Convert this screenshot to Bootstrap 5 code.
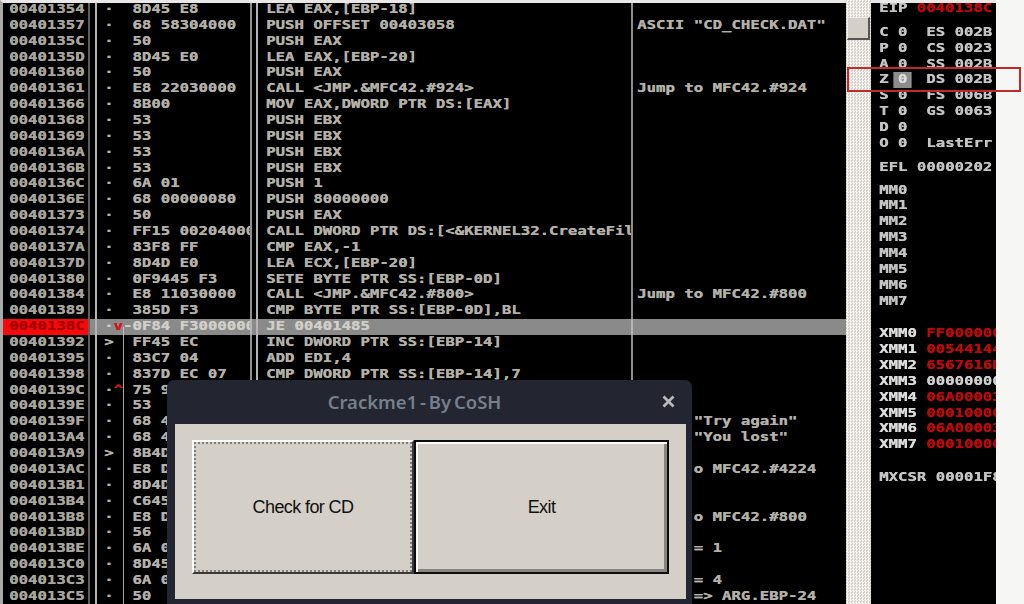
<!DOCTYPE html>
<html lang="en">
<head>
<meta charset="utf-8">
<title>Crackme1</title>
<link href="https://cdn.jsdelivr.net/npm/bootstrap@5.3.0/dist/css/bootstrap.min.css" rel="stylesheet">
<style>
html,body{height:100%;margin:0;overflow:hidden;background:#f6f6f4}
.stage{position:relative;width:1024px;height:604px;overflow:hidden;filter:blur(.4px)}
.dasm{width:846px;height:604px;background:#000;border-left:3px solid #a9a9a9;border-top:3px solid #e9e8e6;overflow:hidden;box-sizing:border-box}
.rows{margin-top:-1px}
.lrow,.rrow{height:15.87px;line-height:15.87px;font-family:"DejaVu Sans Mono",monospace;font-weight:700;font-size:12px;white-space:pre;color:#b3b0a9;text-shadow:.3px 0 currentColor}
.tx{display:inline-block;transform:scaleX(1.305);transform-origin:left center}
.ca,.cb,.cc,.cd{height:100%;overflow:hidden;flex:none;box-sizing:border-box}
.ca{width:87px;padding-left:6px;border-right:2px solid #5f5f5f;color:#a8a59f}
.cb{width:157px;margin-left:5px;padding-left:7px;border-left:2px solid #b3b3b3;border-right:2px solid #8e8e8e}
.cc{width:377px;margin-left:4px;padding-left:8px;border-left:2px solid #b3b3b3;border-right:2px solid #8e8e8e}
.cd{width:213px;padding-left:4px}
.sel{background:#8a8a8a;color:#d0cec8}
.sel .ca{background:#f50a0a;color:#a80000}
.sel .cb,.sel .cc{border-color:#b5b5b5}
.sel .cb{background:linear-gradient(#c4c4c4,#c4c4c4) 26px 100%/1px 50% no-repeat}
.jl{background:linear-gradient(#a5a5a5,#a5a5a5) 26px 0/1px 100% no-repeat}
.rd{color:#d01818}
.scrolltrack{width:25px;height:604px;flex:none;background:repeating-conic-gradient(#f4f3f0 0 25%,#d4d0c8 0 50%) 0 0/3px 3px;padding:17px 1px 0}
.thumb{height:23px;background:#d4d0c8;border-top:1px solid #eee;border-left:1px solid #eee;border-right:2px solid #555;border-bottom:2px solid #555}
.regs{width:125px;height:604px;flex:none;background:#000;border-top:3px solid #e9e8e6;overflow:hidden;box-sizing:border-box;padding-left:8px}
.rrow{color:#c4c4c4}
.first{margin-top:-2px}
.grp{margin-top:8px}
.grp2{margin-top:7px}
.blank{margin-top:16.87px}
.xn{color:#dcdcdc}
.rv{color:#c00808}
.wv{color:#cfcfcf}
.zf{display:inline-block;background:#8c8c8c;color:#dcdcdc;box-shadow:-3px 0 0 #8c8c8c,3px 0 0 #8c8c8c}
.redbox{position:absolute;left:847px;top:67px;width:174px;height:25px;border:2px solid #c12a2a}
.dlg{position:absolute;left:167px;top:380px;width:525px;height:224px;background:#232530;border-radius:7px 7px 0 0;padding:0 6px 5px 8px}
.dlgbar{height:44px;padding-right:32px;color:#75808c;font-family:"Noto Sans",sans-serif;font-weight:600;font-size:18.5px;word-spacing:-2px}
.dlgx{right:11px;top:15px;width:13px;height:13px}
.client{background:#d4d0c8;padding:16px 17px 26px 17px;height:175px}
.wbtn{border-radius:0;padding:0;flex:none;height:134px;font-family:"Liberation Sans",sans-serif;font-size:18px;letter-spacing:-.6px;color:#111;background:#d4d0c8}
.wbtn:hover,.wbtn:active,.wbtn:focus{background:#d4d0c8;color:#111}
.b1{width:222px;border:2px solid;border-color:#fbfbf8 #3a3a3a #3a3a3a #fbfbf8}
.b1 span{border:2px dotted #807f7b}
.b2{width:255px;border:2px solid #0c0c0c;box-shadow:inset 2px 2px 0 #fbfbf8,inset -3px -3px 0 #87857f}
</style>
</head>
<body>
<div class="stage d-flex">
  <div class="dasm">
    <div class="rows">
      <div class="lrow d-flex"><div class="ca"><span class="tx">00401354</span></div><div class="cb"><span class="tx">·  8D45 E8</span></div><div class="cc"><span class="tx">LEA EAX,[EBP-18]</span></div><div class="cd"></div></div>
      <div class="lrow d-flex"><div class="ca"><span class="tx">00401357</span></div><div class="cb"><span class="tx">·  68 58304000</span></div><div class="cc"><span class="tx">PUSH OFFSET 00403058</span></div><div class="cd"><span class="tx">ASCII "CD_CHECK.DAT"</span></div></div>
      <div class="lrow d-flex"><div class="ca"><span class="tx">0040135C</span></div><div class="cb"><span class="tx">·  50</span></div><div class="cc"><span class="tx">PUSH EAX</span></div><div class="cd"></div></div>
      <div class="lrow d-flex"><div class="ca"><span class="tx">0040135D</span></div><div class="cb"><span class="tx">·  8D45 E0</span></div><div class="cc"><span class="tx">LEA EAX,[EBP-20]</span></div><div class="cd"></div></div>
      <div class="lrow d-flex"><div class="ca"><span class="tx">00401360</span></div><div class="cb"><span class="tx">·  50</span></div><div class="cc"><span class="tx">PUSH EAX</span></div><div class="cd"></div></div>
      <div class="lrow d-flex"><div class="ca"><span class="tx">00401361</span></div><div class="cb"><span class="tx">·  E8 22030000</span></div><div class="cc"><span class="tx">CALL &lt;JMP.&amp;MFC42.#924&gt;</span></div><div class="cd"><span class="tx">Jump to MFC42.#924</span></div></div>
      <div class="lrow d-flex"><div class="ca"><span class="tx">00401366</span></div><div class="cb"><span class="tx">·  8B00</span></div><div class="cc"><span class="tx">MOV EAX,DWORD PTR DS:[EAX]</span></div><div class="cd"></div></div>
      <div class="lrow d-flex"><div class="ca"><span class="tx">00401368</span></div><div class="cb"><span class="tx">·  53</span></div><div class="cc"><span class="tx">PUSH EBX</span></div><div class="cd"></div></div>
      <div class="lrow d-flex"><div class="ca"><span class="tx">00401369</span></div><div class="cb"><span class="tx">·  53</span></div><div class="cc"><span class="tx">PUSH EBX</span></div><div class="cd"></div></div>
      <div class="lrow d-flex"><div class="ca"><span class="tx">0040136A</span></div><div class="cb"><span class="tx">·  53</span></div><div class="cc"><span class="tx">PUSH EBX</span></div><div class="cd"></div></div>
      <div class="lrow d-flex"><div class="ca"><span class="tx">0040136B</span></div><div class="cb"><span class="tx">·  53</span></div><div class="cc"><span class="tx">PUSH EBX</span></div><div class="cd"></div></div>
      <div class="lrow d-flex"><div class="ca"><span class="tx">0040136C</span></div><div class="cb"><span class="tx">·  6A 01</span></div><div class="cc"><span class="tx">PUSH 1</span></div><div class="cd"></div></div>
      <div class="lrow d-flex"><div class="ca"><span class="tx">0040136E</span></div><div class="cb"><span class="tx">·  68 00000080</span></div><div class="cc"><span class="tx">PUSH 80000000</span></div><div class="cd"></div></div>
      <div class="lrow d-flex"><div class="ca"><span class="tx">00401373</span></div><div class="cb"><span class="tx">·  50</span></div><div class="cc"><span class="tx">PUSH EAX</span></div><div class="cd"></div></div>
      <div class="lrow d-flex"><div class="ca"><span class="tx">00401374</span></div><div class="cb"><span class="tx">·  FF15 00204000</span></div><div class="cc"><span class="tx">CALL DWORD PTR DS:[&lt;&amp;KERNEL32.CreateFil</span></div><div class="cd"></div></div>
      <div class="lrow d-flex"><div class="ca"><span class="tx">0040137A</span></div><div class="cb"><span class="tx">·  83F8 FF</span></div><div class="cc"><span class="tx">CMP EAX,-1</span></div><div class="cd"></div></div>
      <div class="lrow d-flex"><div class="ca"><span class="tx">0040137D</span></div><div class="cb"><span class="tx">·  8D4D E0</span></div><div class="cc"><span class="tx">LEA ECX,[EBP-20]</span></div><div class="cd"></div></div>
      <div class="lrow d-flex"><div class="ca"><span class="tx">00401380</span></div><div class="cb"><span class="tx">·  0F9445 F3</span></div><div class="cc"><span class="tx">SETE BYTE PTR SS:[EBP-0D]</span></div><div class="cd"></div></div>
      <div class="lrow d-flex"><div class="ca"><span class="tx">00401384</span></div><div class="cb"><span class="tx">·  E8 11030000</span></div><div class="cc"><span class="tx">CALL &lt;JMP.&amp;MFC42.#800&gt;</span></div><div class="cd"><span class="tx">Jump to MFC42.#800</span></div></div>
      <div class="lrow d-flex"><div class="ca"><span class="tx">00401389</span></div><div class="cb"><span class="tx">·  385D F3</span></div><div class="cc"><span class="tx">CMP BYTE PTR SS:[EBP-0D],BL</span></div><div class="cd"></div></div>
      <div class="lrow d-flex sel"><div class="ca"><span class="tx">0040138C</span></div><div class="cb"><span class="tx">·<span class="rd">v</span>-0F84 F3000000</span></div><div class="cc"><span class="tx">JE 00401485</span></div><div class="cd"></div></div>
      <div class="lrow d-flex"><div class="ca"><span class="tx">00401392</span></div><div class="cb jl"><span class="tx">&gt;  FF45 EC</span></div><div class="cc"><span class="tx">INC DWORD PTR SS:[EBP-14]</span></div><div class="cd"></div></div>
      <div class="lrow d-flex"><div class="ca"><span class="tx">00401395</span></div><div class="cb jl"><span class="tx">·  83C7 04</span></div><div class="cc"><span class="tx">ADD EDI,4</span></div><div class="cd"></div></div>
      <div class="lrow d-flex"><div class="ca"><span class="tx">00401398</span></div><div class="cb jl"><span class="tx">·  837D EC 07</span></div><div class="cc"><span class="tx">CMP DWORD PTR SS:[EBP-14],7</span></div><div class="cd"></div></div>
      <div class="lrow d-flex"><div class="ca"><span class="tx">0040139C</span></div><div class="cb jl"><span class="tx">·<span class="rd">^</span> 75 9</span></div><div class="cc"></div><div class="cd"></div></div>
      <div class="lrow d-flex"><div class="ca"><span class="tx">0040139E</span></div><div class="cb jl"><span class="tx">·  53</span></div><div class="cc"></div><div class="cd"></div></div>
      <div class="lrow d-flex"><div class="ca"><span class="tx">0040139F</span></div><div class="cb jl"><span class="tx">·  68 4</span></div><div class="cc"></div><div class="cd"><span class="tx">      "Try again"</span></div></div>
      <div class="lrow d-flex"><div class="ca"><span class="tx">004013A4</span></div><div class="cb jl"><span class="tx">·  68 4</span></div><div class="cc"></div><div class="cd"><span class="tx">      "You lost"</span></div></div>
      <div class="lrow d-flex"><div class="ca"><span class="tx">004013A9</span></div><div class="cb jl"><span class="tx">&gt;  8B4D</span></div><div class="cc"></div><div class="cd"></div></div>
      <div class="lrow d-flex"><div class="ca"><span class="tx">004013AC</span></div><div class="cb jl"><span class="tx">·  E8 D</span></div><div class="cc"></div><div class="cd"><span class="tx">      o MFC42.#4224</span></div></div>
      <div class="lrow d-flex"><div class="ca"><span class="tx">004013B1</span></div><div class="cb jl"><span class="tx">·  8D4D</span></div><div class="cc"></div><div class="cd"></div></div>
      <div class="lrow d-flex"><div class="ca"><span class="tx">004013B4</span></div><div class="cb jl"><span class="tx">·  C645</span></div><div class="cc"></div><div class="cd"></div></div>
      <div class="lrow d-flex"><div class="ca"><span class="tx">004013B8</span></div><div class="cb jl"><span class="tx">·  E8 D</span></div><div class="cc"></div><div class="cd"><span class="tx">      o MFC42.#800</span></div></div>
      <div class="lrow d-flex"><div class="ca"><span class="tx">004013BD</span></div><div class="cb jl"><span class="tx">·  56</span></div><div class="cc"></div><div class="cd"></div></div>
      <div class="lrow d-flex"><div class="ca"><span class="tx">004013BE</span></div><div class="cb jl"><span class="tx">·  6A 0</span></div><div class="cc"></div><div class="cd"><span class="tx">      = 1</span></div></div>
      <div class="lrow d-flex"><div class="ca"><span class="tx">004013C0</span></div><div class="cb jl"><span class="tx">·  8D45</span></div><div class="cc"></div><div class="cd"></div></div>
      <div class="lrow d-flex"><div class="ca"><span class="tx">004013C3</span></div><div class="cb jl"><span class="tx">·  6A 0</span></div><div class="cc"></div><div class="cd"><span class="tx">      = 4</span></div></div>
      <div class="lrow d-flex"><div class="ca"><span class="tx">004013C5</span></div><div class="cb jl"><span class="tx">·  50</span></div><div class="cc"></div><div class="cd"><span class="tx">      =&gt; ARG.EBP-24</span></div></div>
    </div>
  </div>
  <div class="scrolltrack"><div class="thumb"></div></div>
  <div class="regs">
    <div class="rrow first"><span class="tx">EIP <span class="rv">0040138C</span></span></div>
    <div class="rrow grp"><span class="tx">C 0  ES 002B</span></div>
    <div class="rrow"><span class="tx">P 0  CS 0023</span></div>
    <div class="rrow"><span class="tx">A 0  SS 002B</span></div>
    <div class="rrow"><span class="tx">Z <span class="zf">0</span>  DS 002B</span></div>
    <div class="rrow"><span class="tx">S 0  FS 006B</span></div>
    <div class="rrow"><span class="tx">T 0  GS 0063</span></div>
    <div class="rrow"><span class="tx">D 0</span></div>
    <div class="rrow"><span class="tx">O 0  LastErr</span></div>
    <div class="rrow grp"><span class="tx">EFL 00000202</span></div>
    <div class="rrow grp2"><span class="tx">MM0</span></div>
    <div class="rrow"><span class="tx">MM1</span></div>
    <div class="rrow"><span class="tx">MM2</span></div>
    <div class="rrow"><span class="tx">MM3</span></div>
    <div class="rrow"><span class="tx">MM4</span></div>
    <div class="rrow"><span class="tx">MM5</span></div>
    <div class="rrow"><span class="tx">MM6</span></div>
    <div class="rrow"><span class="tx">MM7</span></div>
    <div class="rrow blank"><span class="tx"><span class="xn">XMM0</span> <span class="rv">FF000000</span></span></div>
    <div class="rrow"><span class="tx"><span class="xn">XMM1</span> <span class="rv">00544144</span></span></div>
    <div class="rrow"><span class="tx"><span class="xn">XMM2</span> <span class="rv">6567616D</span></span></div>
    <div class="rrow"><span class="tx"><span class="xn">XMM3</span> <span class="wv">00000000</span></span></div>
    <div class="rrow"><span class="tx"><span class="xn">XMM4</span> <span class="rv">06A00003</span></span></div>
    <div class="rrow"><span class="tx"><span class="xn">XMM5</span> <span class="rv">00010000</span></span></div>
    <div class="rrow"><span class="tx"><span class="xn">XMM6</span> <span class="rv">06A00003</span></span></div>
    <div class="rrow"><span class="tx"><span class="xn">XMM7</span> <span class="rv">00010000</span></span></div>
    <div class="rrow blank"><span class="tx">MXCSR 00001F80</span></div>
  </div>
  <div class="redbox"></div>
  <div class="dlg d-flex flex-column">
    <div class="dlgbar d-flex align-items-center justify-content-center position-relative">Crackme1 - By CoSH
      <svg class="dlgx position-absolute" viewBox="0 0 13 13"><path d="M1.5 1.5l10 10M11.5 1.5l-10 10" stroke="#b9b9b9" stroke-width="2.8" fill="none"/></svg>
    </div>
    <div class="client d-flex">
      <button type="button" class="btn wbtn b1 d-flex"><span class="d-flex flex-fill align-items-center justify-content-center">Check for CD</span></button>
      <button type="button" class="btn wbtn b2">Exit</button>
    </div>
  </div>
</div>
<script src="https://cdn.jsdelivr.net/npm/bootstrap@5.3.0/dist/js/bootstrap.bundle.min.js"></script>
</body>
</html>
